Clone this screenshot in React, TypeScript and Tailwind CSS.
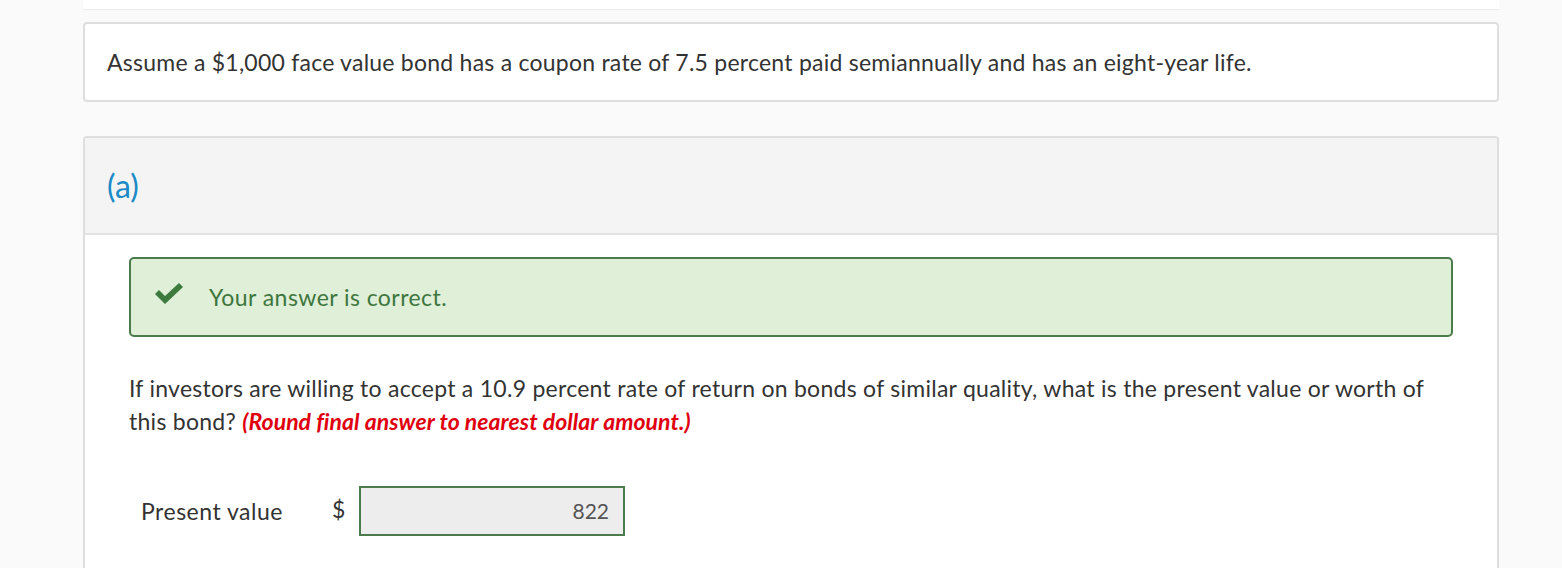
export default function App() {
  return (
    <div className="min-h-[568px] bg-[#fafafa] font-['Lato','Noto_Sans',sans-serif] text-[#333]">
      <div className="mx-[83px] w-[1416px]">
        <div className="h-[10px] border-b border-[#ececec] bg-white" />

        {/* Problem statement */}
        <div className="mt-[12px] flex h-[80px] items-center rounded-[4px] border-2 border-[#dedede] bg-white px-[22px]">
          <p className="text-[23px] tracking-[0.24px]">
            Assume a $1,000 face value bond has a coupon rate of 7.5 percent paid semiannually and has an eight-year life.
          </p>
        </div>

        {/* Part (a) */}
        <div className="mt-[34px] rounded-t-[4px] border-2 border-b-0 border-[#dedede] bg-white">
          <div className="flex h-[97px] items-center border-b-2 border-[#e2e2e2] bg-[#f4f4f4] px-[22px]">
            <span className="text-[32px] text-[#1b8ac6]">(a)</span>
          </div>

          <div className="px-[44px] pb-[40px] pt-[22px]">
            <div className="flex h-[80px] items-center rounded-[5px] border-2 border-[#4b7a4b] bg-[#dfefd8] px-[22px]">
              <svg width="32" height="22" viewBox="0 0 32 22" className="mr-[24px] mb-[6px]">
                <path d="M2 11 L6 7 L12 13 L26 0 L30 4 L12 21 Z" fill="#3d7a3d" />
              </svg>
              <span className="text-[23px] tracking-[0.45px] text-[#3d763d]">Your answer is correct.</span>
            </div>

            <p className="mt-[35px] text-[23px] leading-[33px] tracking-[0.27px]">
              If investors are willing to accept a 10.9 percent rate of return on bonds of similar quality, what is the present value or worth of this bond?{" "}
              <span className="font-bold italic tracking-[0.05px] text-[#e0000e]">(Round final answer to nearest dollar amount.)</span>
            </p>

            <div className="mt-[48px] flex items-center pl-[12px]">
              <span className="w-[191px] text-[23px] tracking-[0.5px]">Present value</span>
              <span className="mb-[4px] w-[27px] text-[23px]">$</span>
              <div className="flex h-[50px] w-[266px] items-center justify-end border-2 border-[#4b7a4b] bg-[#ededed] px-[14px] text-[21px] text-[#555]">
                822
              </div>
            </div>
          </div>
        </div>
      </div>
    </div>
  );
}
